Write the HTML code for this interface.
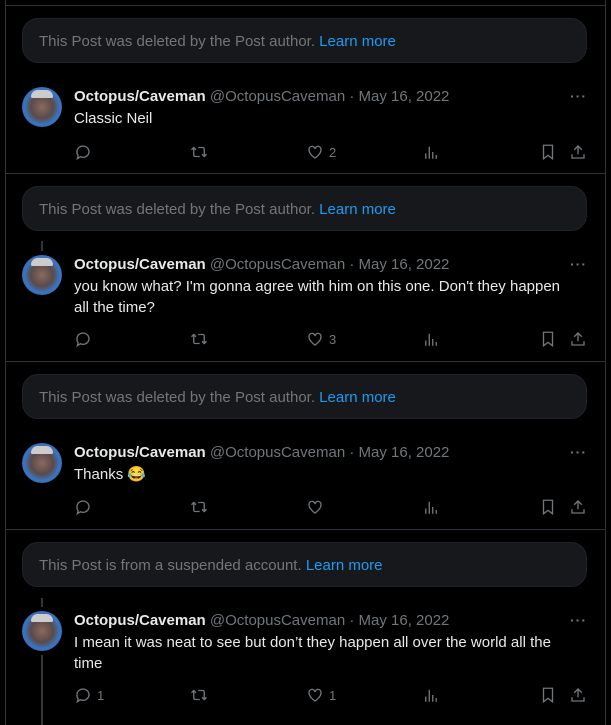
<!DOCTYPE html>
<html><head><meta charset="utf-8"><style>
*{margin:0;padding:0;box-sizing:border-box}
body{width:611px;height:725px;background:#000;position:relative;overflow:hidden;font-family:"Liberation Sans",Arial,sans-serif;font-size:15px;color:#e7e9ea}
.vl{position:absolute;top:0;bottom:0;width:1px;background:#2f3336}
.hl{position:absolute;left:5px;width:600px;height:1px;background:#2f3336}
.box{position:absolute;left:22px;width:565px;height:45px;background:#16181c;border:1px solid #202327;border-radius:16px;color:#71767b;padding:0 16px;line-height:46px}
.box a{color:#1d9bf0;text-decoration:none}
.av{position:absolute;left:22px;width:40px;height:40px;border-radius:50%;background:radial-gradient(ellipse at 50% 50%,#8a6a60 0,#5a4a48 40%,#3a74c0 62%,#2a62b0 100%);overflow:hidden}
.av:before{content:"";position:absolute;left:9px;top:3px;width:22px;height:8px;border-radius:10px 10px 2px 2px;background:#ccc}
.hd{position:absolute;left:74px;white-space:nowrap;line-height:20px}
.hd b{color:#e7e9ea}
.hd span{color:#71767b}
.tx{position:absolute;left:74px;width:497px;line-height:21px}
.dots{position:absolute;left:570px;color:#71767b;font-size:14px;letter-spacing:1px;font-weight:bold}
.act{position:absolute;left:0;width:611px;height:20px;color:#71767b;font-size:13px}
.act svg{position:absolute;top:0;width:18px;height:18px;fill:none;stroke:#71767b;stroke-width:1.8}
.act .n{position:absolute;top:2px}
.th{position:absolute;left:41px;width:2px;background:#333639}
</style></head><body>
<div class="vl" style="left:5px"></div><div class="vl" style="left:605px"></div>
<div class="hl" style="top:5px"></div>
<div class="hl" style="top:173px"></div>
<div class="hl" style="top:361px"></div>
<div class="hl" style="top:529px"></div>

<div class="box" style="top:18px">This Post was deleted by the Post author. <a>Learn more</a></div>
<div class="av" style="top:87px"></div>
<div class="hd" style="top:87px"><b>Octopus/Caveman</b> <span>@OctopusCaveman · May 16, 2022</span></div>
<div class="dots" style="top:88px">···</div>
<div class="tx" style="top:108px">Classic Neil</div>
<div class="act" style="top:143px">
<svg style="left:74px" viewBox="0 0 24 24"><path d="M4 11.5a8 7.5 0 1 1 4.5 6.8L4.5 21l1-4A7.5 7.5 0 0 1 4 11.5z"/></svg>
<svg style="left:190px" viewBox="0 0 24 24"><path d="M5 6v10a2 2 0 0 0 2 2h6M2 9l3-3 3 3M19 18V8a2 2 0 0 0-2-2h-6M16 15l3 3 3-3"/></svg>
<svg style="left:306px" viewBox="0 0 24 24"><path d="M12 20s-8-5-8-11a4 4 0 0 1 8-1 4 4 0 0 1 8 1c0 6-8 11-8 11z"/></svg><span class="n" style="left:329px">2</span>
<svg style="left:422px" viewBox="0 0 24 24"><path d="M5 21v-7M9.7 21V5M14.3 21v-9M19 21v-5"/></svg>
<svg style="left:539px" viewBox="0 0 24 24"><path d="M6 3h12v18l-6-4.5L6 21z"/></svg>
<svg style="left:569px" viewBox="0 0 24 24"><path d="M12 15V4M7 9l5-5 5 5M4 15v5h16v-5"/></svg>
</div>

<div class="box" style="top:186px">This Post was deleted by the Post author. <a>Learn more</a></div>
<div class="th" style="top:241px;height:10px"></div>
<div class="av" style="top:255px"></div>
<div class="hd" style="top:255px"><b>Octopus/Caveman</b> <span>@OctopusCaveman · May 16, 2022</span></div>
<div class="dots" style="top:256px">···</div>
<div class="tx" style="top:276px">you know what? I'm gonna agree with him on this one. Don't they happen all the time?</div>
<div class="act" style="top:330px">
<svg style="left:74px" viewBox="0 0 24 24"><path d="M4 11.5a8 7.5 0 1 1 4.5 6.8L4.5 21l1-4A7.5 7.5 0 0 1 4 11.5z"/></svg>
<svg style="left:190px" viewBox="0 0 24 24"><path d="M5 6v10a2 2 0 0 0 2 2h6M2 9l3-3 3 3M19 18V8a2 2 0 0 0-2-2h-6M16 15l3 3 3-3"/></svg>
<svg style="left:306px" viewBox="0 0 24 24"><path d="M12 20s-8-5-8-11a4 4 0 0 1 8-1 4 4 0 0 1 8 1c0 6-8 11-8 11z"/></svg><span class="n" style="left:329px">3</span>
<svg style="left:422px" viewBox="0 0 24 24"><path d="M5 21v-7M9.7 21V5M14.3 21v-9M19 21v-5"/></svg>
<svg style="left:539px" viewBox="0 0 24 24"><path d="M6 3h12v18l-6-4.5L6 21z"/></svg>
<svg style="left:569px" viewBox="0 0 24 24"><path d="M12 15V4M7 9l5-5 5 5M4 15v5h16v-5"/></svg>
</div>

<div class="box" style="top:374px">This Post was deleted by the Post author. <a>Learn more</a></div>
<div class="av" style="top:443px"></div>
<div class="hd" style="top:443px"><b>Octopus/Caveman</b> <span>@OctopusCaveman · May 16, 2022</span></div>
<div class="dots" style="top:444px">···</div>
<div class="tx" style="top:464px">Thanks 😂</div>
<div class="act" style="top:498px">
<svg style="left:74px" viewBox="0 0 24 24"><path d="M4 11.5a8 7.5 0 1 1 4.5 6.8L4.5 21l1-4A7.5 7.5 0 0 1 4 11.5z"/></svg>
<svg style="left:190px" viewBox="0 0 24 24"><path d="M5 6v10a2 2 0 0 0 2 2h6M2 9l3-3 3 3M19 18V8a2 2 0 0 0-2-2h-6M16 15l3 3 3-3"/></svg>
<svg style="left:306px" viewBox="0 0 24 24"><path d="M12 20s-8-5-8-11a4 4 0 0 1 8-1 4 4 0 0 1 8 1c0 6-8 11-8 11z"/></svg>
<svg style="left:422px" viewBox="0 0 24 24"><path d="M5 21v-7M9.7 21V5M14.3 21v-9M19 21v-5"/></svg>
<svg style="left:539px" viewBox="0 0 24 24"><path d="M6 3h12v18l-6-4.5L6 21z"/></svg>
<svg style="left:569px" viewBox="0 0 24 24"><path d="M12 15V4M7 9l5-5 5 5M4 15v5h16v-5"/></svg>
</div>

<div class="box" style="top:542px">This Post is from a suspended account. <a>Learn more</a></div>
<div class="th" style="top:598px;height:9px"></div>
<div class="av" style="top:611px"></div>
<div class="th" style="top:655px;height:70px"></div>
<div class="hd" style="top:611px"><b>Octopus/Caveman</b> <span>@OctopusCaveman · May 16, 2022</span></div>
<div class="dots" style="top:612px">···</div>
<div class="tx" style="top:632px">I mean it was neat to see but don’t they happen all over the world all the time</div>
<div class="act" style="top:686px">
<svg style="left:74px" viewBox="0 0 24 24"><path d="M4 11.5a8 7.5 0 1 1 4.5 6.8L4.5 21l1-4A7.5 7.5 0 0 1 4 11.5z"/></svg><span class="n" style="left:97px">1</span>
<svg style="left:190px" viewBox="0 0 24 24"><path d="M5 6v10a2 2 0 0 0 2 2h6M2 9l3-3 3 3M19 18V8a2 2 0 0 0-2-2h-6M16 15l3 3 3-3"/></svg>
<svg style="left:306px" viewBox="0 0 24 24"><path d="M12 20s-8-5-8-11a4 4 0 0 1 8-1 4 4 0 0 1 8 1c0 6-8 11-8 11z"/></svg><span class="n" style="left:329px">1</span>
<svg style="left:422px" viewBox="0 0 24 24"><path d="M5 21v-7M9.7 21V5M14.3 21v-9M19 21v-5"/></svg>
<svg style="left:539px" viewBox="0 0 24 24"><path d="M6 3h12v18l-6-4.5L6 21z"/></svg>
<svg style="left:569px" viewBox="0 0 24 24"><path d="M12 15V4M7 9l5-5 5 5M4 15v5h16v-5"/></svg>
</div>
</body></html>
